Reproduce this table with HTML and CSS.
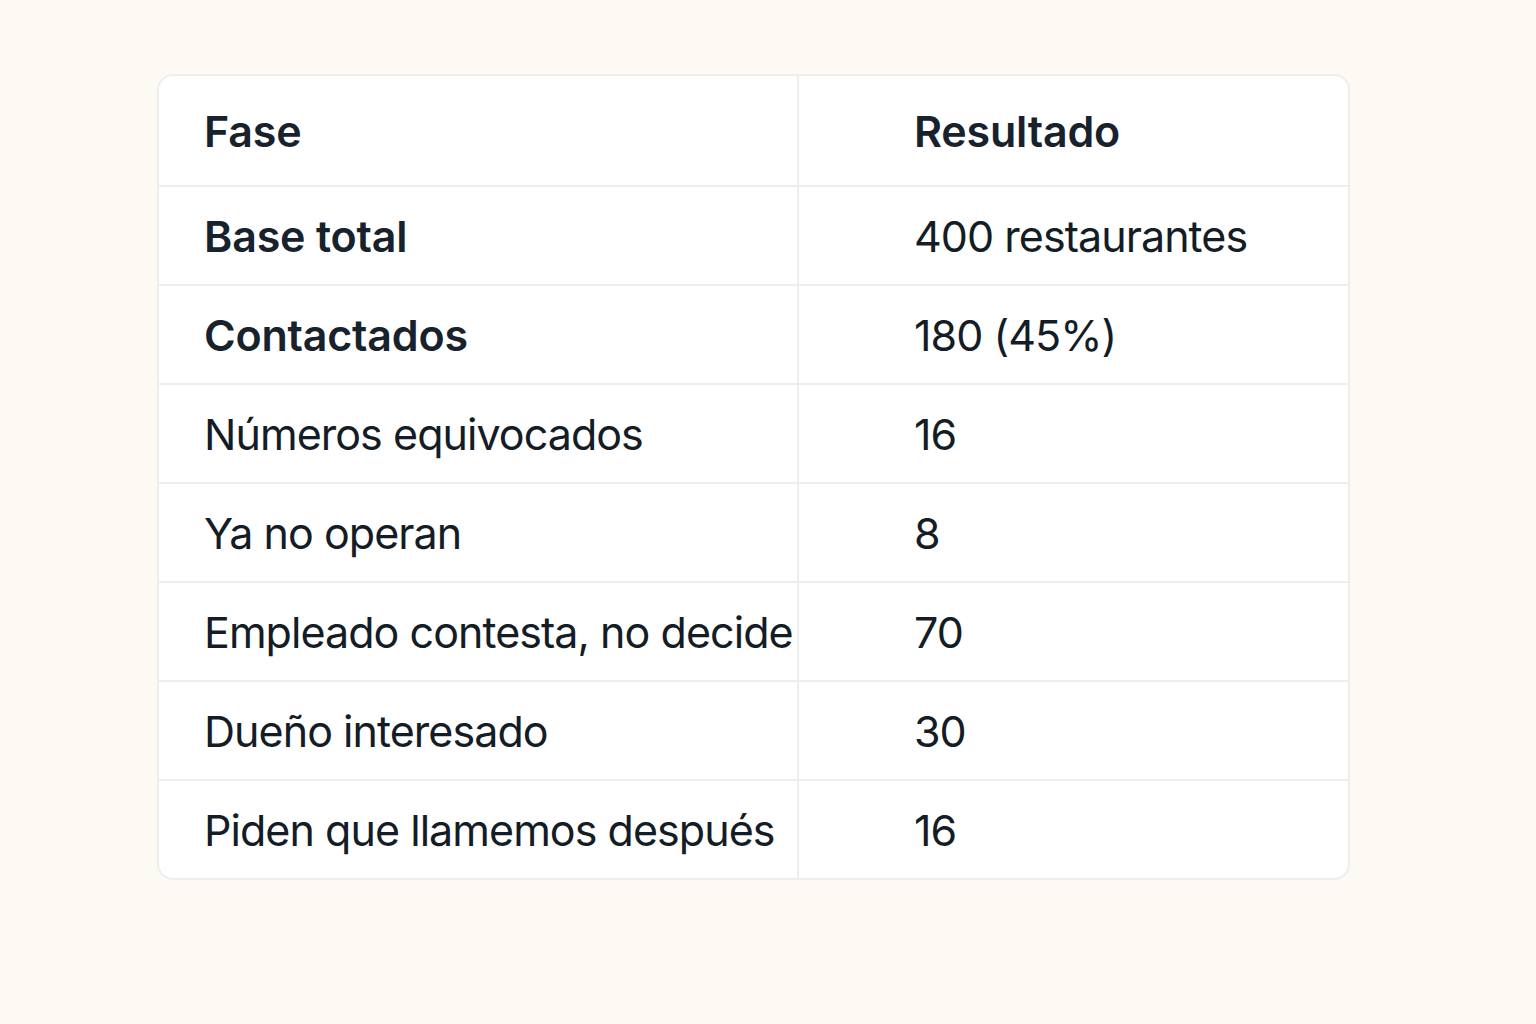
FILE: index.html
```html
<!DOCTYPE html>
<html lang="es">
<head>
<meta charset="utf-8">
<title>Fases</title>
<link rel="stylesheet" href="styles.css">
</head>
<body>
<div class="page">
  <div class="card">
    <div class="row head"><div class="c1">Fase</div><div class="c2">Resultado</div></div>
    <div class="row"><div class="c1 b">Base total</div><div class="c2">400 restaurantes</div></div>
    <div class="row"><div class="c1 b">Contactados</div><div class="c2">180 (45%)</div></div>
    <div class="row"><div class="c1">Números equivocados</div><div class="c2">16</div></div>
    <div class="row"><div class="c1">Ya no operan</div><div class="c2">8</div></div>
    <div class="row"><div class="c1">Empleado contesta, no decide</div><div class="c2">70</div></div>
    <div class="row"><div class="c1">Dueño interesado</div><div class="c2">30</div></div>
    <div class="row last"><div class="c1">Piden que llamemos después</div><div class="c2">16</div></div>
  </div>
</div>
</body>
</html>
```
FILE: styles.css
```css
html, body { margin: 0; padding: 0; }
body {
  background: #fdf9f3;
  font-family: Inter, "Noto Sans", sans-serif;
  color: #141c26;
}
.page {
  width: 1536px;
  height: 1024px;
  padding: 74px 0 0 157px;
  box-sizing: border-box;
}
.card {
  width: 1193px;
  background: #ffffff;
  border: 2px solid #eceef0;
  border-radius: 16px;
  box-sizing: border-box;
  overflow: hidden;
}
.row {
  display: grid;
  grid-template-columns: 640px 1fr;
  height: 99px;
  border-bottom: 2px solid #eceef0;
  box-sizing: border-box;
}
.row.head { height: 111px; }
.row.last { border-bottom: none; height: 97px; }
.c1, .c2 {
  display: flex;
  align-items: center;
  font-size: 43px;
  letter-spacing: -0.95px;
  white-space: nowrap;
}
.c1 { padding-left: 45px; border-right: 2px solid #eceef0; }
.c2 { padding-left: 115px; }
.head .c1, .head .c2, .b { font-weight: 600; color: #17222d; letter-spacing: -0.2px; }
```
